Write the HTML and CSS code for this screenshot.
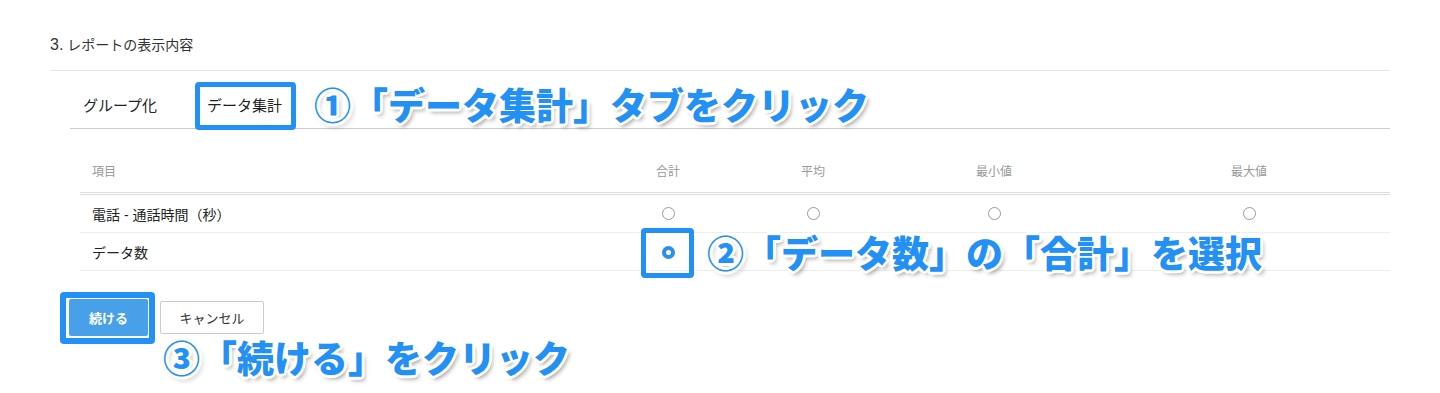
FILE: index.html
```html
<!DOCTYPE html>
<html lang="ja">
<head>
    <meta charset="UTF-8">
    <title>レポートの表示内容</title>
    <link rel="stylesheet" href="styles.css">
</head>
<body>

    <div class="page">
        <h3 class="section-title"><span class="num">3.</span> レポートの表示内容</h3>

        <div class="tabs">
            <div class="tab">グループ化</div>
            <div class="tab active">データ集計</div>
        </div>

        <div class="agg-table">
            <div class="row head">
                <div class="cell item">項目</div>
                <div class="cell">合計</div>
                <div class="cell">平均</div>
                <div class="cell">最小値</div>
                <div class="cell">最大値</div>
            </div>
            <div class="row">
                <div class="cell item">電話 - 通話時間（秒）</div>
                <div class="cell"><span class="radio"></span></div>
                <div class="cell"><span class="radio"></span></div>
                <div class="cell"><span class="radio"></span></div>
                <div class="cell"><span class="radio"></span></div>
            </div>
            <div class="row">
                <div class="cell item">データ数</div>
                <div class="cell mark"><span class="radio checked"></span></div>
                <div class="cell"></div>
                <div class="cell"></div>
                <div class="cell"></div>
            </div>
        </div>

        <div class="actions">
            <button class="btn btn-primary">続ける</button>
            <button class="btn btn-cancel">キャンセル</button>
        </div>

        <!-- annotations -->
        <div class="note note-1">①「データ集計」タブをクリック</div>
        <div class="note note-2">②「データ数」の「合計」を選択</div>
        <div class="note note-3">③「続ける」をクリック</div>
    </div>

</body>
</html>
```

FILE: styles.css
```css
/* General */
body {
    margin: 0;
    padding: 0;
    background: #fff;
    color: #333;
    font-family: 'Liberation Sans', 'Noto Sans CJK JP', sans-serif;
}

.page {
    position: relative;
    width: 1340px;
    margin-left: 50px;
    height: 393px;
}

/* Section title */
.section-title {
    margin: 0;
    padding: 35px 0 15px;
    font-size: 14px;
    font-weight: normal;
    line-height: 20px;
    border-bottom: 1px solid #e5e5e5;
}
.section-title .num {
    font-size: 16px;
}

/* Tabs */
.tabs {
    display: flex;
    margin: 12px 0 0 20px;
    border-bottom: 1px solid #ccc;
}
.tab {
    position: relative;
    padding: 12px 13px;
    font-size: 15px;
    line-height: 21px;
    color: #222;
}
.tab + .tab {
    margin-left: 25px;
}
.tab.active {
    width: 77px;
    padding: 12px;
}
.tab.active::after {
    content: "";
    position: absolute;
    top: -1px;
    bottom: -2px;
    left: 0;
    right: 0;
    border: 5px solid #2390f5;
    border-radius: 4px;
}

/* Table */
.agg-table {
    margin: 20px 0 0 30px;
    width: 1310px;
}
.row {
    display: grid;
    grid-template-columns: 510px 156px 134px 228px 282px;
    height: 37px;
    border-bottom: 1px solid #eee;
    align-items: center;
}
.row.head {
    height: 43px;
    align-items: start;
    border-bottom: 3px double #ddd;
}
.row.head .cell {
    padding-top: 14px;
    font-size: 12px;
    line-height: 18px;
    color: #999;
}
.cell {
    font-size: 14px;
    color: #222;
    display: flex;
    justify-content: center;
    align-items: center;
}
.cell.item {
    justify-content: flex-start;
    padding-left: 12px;
}
.cell.mark {
    position: relative;
}
.cell.mark::after {
    content: "";
    position: absolute;
    left: 50%;
    top: 50%;
    width: 43px;
    height: 40px;
    margin: -24px 0 0 -27px;
    border: 5px solid #2390f5;
    border-radius: 4px;
}

.radio {
    display: inline-block;
    width: 11px;
    height: 11px;
    border: 1px solid #999;
    border-radius: 50%;
    background: #fff;
}
.radio.checked {
    width: 5px;
    height: 5px;
    border: 4px solid #2c8ef0;
    margin-top: 2px;
}

/* Buttons */
.actions {
    display: flex;
    align-items: center;
    margin: 28px 0 0 19px;
}
.btn {
    font-family: 'Liberation Sans', 'Noto Sans CJK JP', sans-serif;
    font-size: 13px;
    border-radius: 2px;
    cursor: pointer;
}
.btn-primary {
    position: relative;
    width: 79px;
    height: 37px;
    background: #47a0e8;
    color: #fff;
    font-weight: bold;
    border: none;
}
.btn-primary::after {
    content: "";
    position: absolute;
    top: -7px;
    left: -9px;
    right: -7px;
    bottom: -8px;
    border: 6px solid #2390f5;
    border-radius: 4px;
}
.btn-cancel {
    width: 104px;
    height: 33px;
    margin-left: 12px;
    background: #fff;
    color: #333;
    border: 1px solid #ccc;
}

/* Annotations */
.note {
    position: absolute;
    font-family: 'Noto Sans CJK JP', sans-serif;
    font-weight: 900;
    font-size: 37px;
    line-height: 40px;
    color: #2390f5;
    white-space: nowrap;
    text-shadow:
        3px 0 0 #fff, -3px 0 0 #fff, 0 3px 0 #fff, 0 -3px 0 #fff,
        2px 2px 0 #fff, -2px 2px 0 #fff, 2px -2px 0 #fff, -2px -2px 0 #fff,
        3px 4px 4px rgba(0, 0, 0, 0.35);
}
.note-1 {
    left: 264px;
    top: 84px;
}
.note-2 {
    left: 657px;
    top: 232px;
}
.note-3 {
    left: 113px;
    top: 337px;
}
```
